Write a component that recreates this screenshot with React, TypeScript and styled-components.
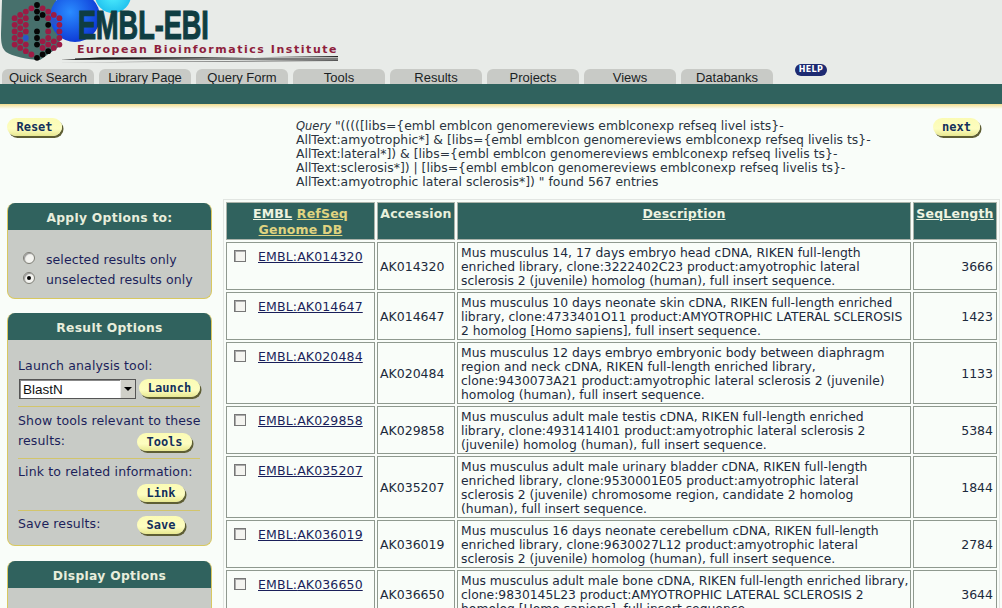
import React from "react";
import styled, { createGlobalStyle } from "styled-components";

const Global = createGlobalStyle`
  html, body { margin: 0; padding: 0; background: #f9fdf9; height: 608px; overflow: hidden; }
  body { font-family: "DejaVu Sans", Verdana, sans-serif; font-size: 12.5px; color: #1c2a3c; }
`;
const Page = styled.div`width: 1002px; height: 608px; overflow: hidden;`;
const Header = styled.header`height: 84px; background: #e8ebe8; display: flex; flex-direction: column; justify-content: flex-end;`;
const Logo = styled.div`position: relative; width: 340px; height: 66px; flex: none; overflow: hidden;`;
const LogoArt = styled.svg`position: absolute; inset: 0;`;
const LogoTitle = styled.span`
  position: absolute; left: 78px; top: 8px; font: 700 41px/34px "Liberation Sans", sans-serif; color: #0f3d42;
  -webkit-text-stroke: 1.2px #0f3d42; transform: scaleX(0.66); transform-origin: left top; white-space: nowrap;
`;
const LogoSub = styled.span`
  position: absolute; left: 77px; top: 43px; font: 700 11px/13px "DejaVu Sans", sans-serif; color: #8f1f3d; letter-spacing: 1.55px; white-space: nowrap;
`;
const TabRow = styled.nav`display: flex; align-items: flex-end; padding-left: 2px; gap: 5px; height: 18px; position: relative;`;
const Tab = styled.a`
  width: 92px; height: 15px; background: #c8cac6; border-radius: 6px 6px 0 0; text-align: center;
  font: 13px/17px "Liberation Sans", Arial, sans-serif; color: #1a1f24; overflow: hidden;
`;
const Help = styled.a`
  position: absolute; left: 795px; top: -2px; width: 32px; height: 12px; border-radius: 6px; background: #1d2a72; color: #fff;
  font: 700 8px/12px "DejaVu Sans", sans-serif; text-align: center; letter-spacing: .3px;
`;
const Band = styled.div`height: 20px; background: #30625e;`;
const Fade = styled.div`height: 5px; background: linear-gradient(#f3dc8e, #f9fdf9);`;
const QueryRow = styled.section`
  box-sizing: border-box; height: 92px; padding: 9px 22px 0 7px; display: grid; grid-template-columns: 289px 1fr auto; align-items: start;
`;
const Btn = styled.button`
  display: block; padding: 0; margin: 0; height: 18px; width: ${p => p.$w}px; border: none; border-radius: 9px; flex: none;
  background: linear-gradient(#fbfbb4, #fdfdc0 60%, #e8e890); box-shadow: 1.5px 2px 0 #5e5e34;
  font: 700 12px/17px "DejaVu Sans Mono", monospace; color: #14305a; text-align: center;
`;
const Query = styled.p`margin: 1px 0 0; line-height: 14px; font-size: 12.4px; color: #2a3440;`;
const QueryLabel = styled.i`font-size: 11.5px;`;
const Main = styled.div`display: flex; align-items: flex-start; gap: 11px; padding-left: 7px;`;
const Side = styled.aside`width: 205px; flex: none; display: flex; flex-direction: column; gap: 14px; padding-top: 2px;`;
const Panel = styled.section`
  background: #c8cbc6; border: 1px solid #d8c860; border-top: none; border-radius: 8px; overflow: hidden; margin-top: ${p => p.$mt || 0}px;
`;
const PanelTitle = styled.h2`
  margin: 0; height: 27px; background: #30625e; color: #e8eedc; font: 700 12.3px/30px "DejaVu Sans", sans-serif; text-align: center; letter-spacing: .3px;
`;
const RadioGroup = styled.div`padding: 22px 0 12px 15px; display: flex; flex-direction: column; gap: 6px;`;
const RadioRow = styled.label`display: flex; align-items: center; gap: 11px; height: 14px; font-size: 12.5px; color: #1c1f5a; letter-spacing: .08px;`;
const RadioDot = styled.span`
  width: 10px; height: 10px; border-radius: 50%; flex: none; background: #f4f4f0; border: 1px solid #7c7c74; box-shadow: inset 1px 1px 1px #999; position: relative; top: -1px;
  &::after { content: ""; display: ${p => (p.$on ? "block" : "none")}; width: 4px; height: 4px; border-radius: 50%; background: #000; margin: 3px; }
`;
const Rule = styled.div`height: 1px; background: #d2c56c; margin: 0 11px 0 10px;`;
const Block = styled.div`padding: ${p => p.$pad}; color: #1c1f5a; line-height: 20px; letter-spacing: .14px; font-size: 12.5px;`;
const BtnLine = styled.div`display: flex; justify-content: space-between; align-items: flex-end; min-height: 20px; padding-right: ${p => p.$r}px;`;
const ToolRow = styled.div`display: flex; align-items: flex-start; gap: 3px; margin: 3px 0 0 1px;`;
const Select = styled.div`
  width: 117px; height: 20px; background: #fff; border: 1px solid #555; box-shadow: inset 1px 1px 0 #888; display: flex; justify-content: space-between; box-sizing: border-box;
  font: 13.5px/19px "Liberation Sans", sans-serif; color: #111; padding-left: 3px; letter-spacing: 0;
`;
const SelectArrow = styled.span`
  width: 14px; background: #cfcfc8; border-left: 1px solid #eee; display: flex; align-items: center; justify-content: center;
  &::after { content: ""; border: 4px solid transparent; border-top: 4px solid #000; border-bottom: 0; }
`;
const Results = styled.table`
  border-collapse: separate; border-spacing: 2px; table-layout: fixed; width: 777px; margin-top: -2px; border: 1px solid #e2e6e2; flex: none;
`;
const Th = styled.th`
  background: #30625e; color: #e8f0dc; vertical-align: top; padding: 3px 2px 0; font-size: 12.5px; line-height: 16px; font-weight: 700; letter-spacing: .2px;
  border: 1px solid #aab3aa; height: 38px; box-sizing: border-box;
`;
const HeadLink = styled.a`text-decoration: underline; color: ${p => (p.$gold ? "#e0d480" : "#eef3e0")};`;
const Td = styled.td`
  border: 1px solid #8f998f; padding: 2px 3px 0; line-height: 14px; font-size: 12.35px; color: #1c2a3c; vertical-align: ${p => (p.$top ? "top" : "middle")};
  text-align: ${p => (p.$right ? "right" : "left")}; box-sizing: border-box; overflow: hidden; white-space: nowrap;
`;
const AccTd = styled(Td)`font-size: 12.5px; padding-left: 2px;`;
const NumTd = styled(Td)`font-size: 12.5px;`;
const Check = styled.span`display: inline-block; width: 10px; height: 10px; background: #f4f4f0; border: 1px solid #777; box-shadow: inset 1px 1px 0 #aaa; margin: 5px 0 0 4px;`;
const EntryLink = styled.a`text-decoration: underline; color: #1a1f5a; margin-left: 12px; font-size: 12.5px; letter-spacing: .14px; position: relative; top: -1px;`;
const LineBreak = styled.span`display: block;`;

const black = new Set(["0,0", "0,2", "0,4", "1,3", "0,8", "0,10", "0,12", "0,16", "1,15", "2,14", "2,6", "3,9"]);
const blue = new Set(["3,5", "-2,10"]);
const skip = (k: number, j: number) =>
  (k === -1 && j >= 3 && j <= 14) || (k === 1 && j >= 5 && j <= 9) || (k === 3 && j >= 7 && j <= 9) || (k === 0 && j === 6) || (k === 0 && j === 14);
const lattice: { x: number; y: number; c: string }[] = [];
for (let k = -4; k <= 4; k++) {
  for (let j = Math.abs(k); j <= 17 - Math.abs(k); j++) {
    if ((k + j) % 2 !== 0 || skip(k, j)) continue;
    const id = `${k},${j}`;
    lattice.push({ x: 37 + 5.6 * k, y: 5 + 3.3 * j, c: black.has(id) ? "#050505" : blue.has(id) ? "#2a55c8" : "#9b1b44" });
  }
}

const rows = [
  ["AK014320", ["Mus musculus 14, 17 days embryo head cDNA, RIKEN full-length", "enriched library, clone:3222402C23 product:amyotrophic lateral", "sclerosis 2 (juvenile) homolog (human), full insert sequence."], "3666", 48],
  ["AK014647", ["Mus musculus 10 days neonate skin cDNA, RIKEN full-length enriched", "library, clone:4733401O11 product:AMYOTROPHIC LATERAL SCLEROSIS", "2 homolog [Homo sapiens], full insert sequence."], "1423", 48],
  ["AK020484", ["Mus musculus 12 days embryo embryonic body between diaphragm", "region and neck cDNA, RIKEN full-length enriched library,", "clone:9430073A21 product:amyotrophic lateral sclerosis 2 (juvenile)", "homolog (human), full insert sequence."], "1133", 62],
  ["AK029858", ["Mus musculus adult male testis cDNA, RIKEN full-length enriched", "library, clone:4931414I01 product:amyotrophic lateral sclerosis 2", "(juvenile) homolog (human), full insert sequence."], "5384", 48],
  ["AK035207", ["Mus musculus adult male urinary bladder cDNA, RIKEN full-length", "enriched library, clone:9530001E05 product:amyotrophic lateral", "sclerosis 2 (juvenile) chromosome region, candidate 2 homolog", "(human), full insert sequence."], "1844", 62],
  ["AK036019", ["Mus musculus 16 days neonate cerebellum cDNA, RIKEN full-length", "enriched library, clone:9630027L12 product:amyotrophic lateral", "sclerosis 2 (juvenile) homolog (human), full insert sequence."], "2784", 48],
  ["AK036650", ["Mus musculus adult male bone cDNA, RIKEN full-length enriched library,", "clone:9830145L23 product:AMYOTROPHIC LATERAL SCLEROSIS 2", "homolog [Homo sapiens], full insert sequence."], "3644", 48],
] as const;

export default function App() {
  return (
    <Page>
      <Global />
      <Header>
        <Logo>
          <LogoArt width="340" height="66" viewBox="0 0 340 66">
            <defs>
              <radialGradient id="b" cx=".4" cy=".4" r=".7"><stop offset="0" stopColor="#2a8cff" /><stop offset="1" stopColor="#0a2fd0" /></radialGradient>
              <radialGradient id="c" cx=".5" cy=".5" r=".7"><stop offset="0" stopColor="#50f0ff" /><stop offset="1" stopColor="#10b0e8" /></radialGradient>
            </defs>
            <circle cx="113" cy="-5" r="18" fill="url(#c)" />
            <path d="M2 0 H56 L60 46 L40 60 C28 60 12 56 6 52 C2 48 1 44 1 34 Z" fill="#47706c" />
            <circle cx="75" cy="17" r="25" fill="url(#b)" />
            {lattice.map((d, i) => <circle key={i} cx={d.x} cy={d.y} r="2.9" fill={d.c} />)}
            <path d="M60 60 L338 56 V57.2 H100 Z" fill="#222" />
            <rect x="75" y="58.5" width="263" height="1" fill="#111" />
            <path d="M55 62.5 L338 60 V61 Z" fill="#555" />
          </LogoArt>
          <LogoTitle>EMBL-EBI</LogoTitle>
          <LogoSub>European Bioinformatics Institute</LogoSub>
        </Logo>
        <TabRow>
          {["Quick Search", "Library Page", "Query Form", "Tools", "Results", "Projects", "Views", "Databanks"].map(t => <Tab key={t}>{t}</Tab>)}
          <Help>HELP</Help>
        </TabRow>
      </Header>
      <Band />
      <Fade />
      <QueryRow>
        <Btn $w={55}>Reset</Btn>
        <Query>
          <QueryLabel>Query</QueryLabel> "(((([libs={"{"}embl emblcon genomereviews emblconexp refseq livel ists{"}"}-<br />
          AllText:amyotrophic*] &amp; [libs={"{"}embl emblcon genomereviews emblconexp refseq livelis ts{"}"}-<br />
          AllText:lateral*]) &amp; [libs={"{"}embl emblcon genomereviews emblconexp refseq livelis ts{"}"}-<br />
          AllText:sclerosis*]) | [libs={"{"}embl emblcon genomereviews emblconexp refseq livelis ts{"}"}-<br />
          AllText:amyotrophic lateral sclerosis*]) " found 567 entries
        </Query>
        <Btn $w={47}>next</Btn>
      </QueryRow>
      <Main>
        <Side>
          <Panel>
            <PanelTitle>Apply Options to:</PanelTitle>
            <RadioGroup>
              <RadioRow><RadioDot />selected results only</RadioRow>
              <RadioRow><RadioDot $on />unselected results only</RadioRow>
            </RadioGroup>
          </Panel>
          <Panel>
            <PanelTitle>Result Options</PanelTitle>
            <Block $pad="16px 0 7px 10px">
              Launch analysis tool:
              <ToolRow><Select>BlastN<SelectArrow /></Select><Btn $w={61}>Launch</Btn></ToolRow>
            </Block>
            <Rule />
            <Block $pad="4px 0 7px 10px">
              Show tools relevant to these
              <BtnLine $r={19}>results:<Btn $w={55}>Tools</Btn></BtnLine>
            </Block>
            <Rule />
            <Block $pad="3px 0 8px 10px">
              Link to related information:
              <BtnLine $r={26}><span /><Btn $w={48}>Link</Btn></BtnLine>
            </Block>
            <Rule />
            <Block $pad="3px 0 11px 10px">
              <BtnLine $r={26}>Save results:<Btn $w={48}>Save</Btn></BtnLine>
            </Block>
          </Panel>
          <Panel $mt={1}>
            <PanelTitle>Display Options</PanelTitle>
            <Block $pad="40px 0" />
          </Panel>
        </Side>
        <Results>
          <colgroup><col width="149" /><col width="78" /><col width="454" /><col width="84" /></colgroup>
          <thead>
            <tr>
              <Th><HeadLink>EMBL</HeadLink> <HeadLink $gold>RefSeq</HeadLink><LineBreak><HeadLink $gold>Genome DB</HeadLink></LineBreak></Th>
              <Th>Accession</Th>
              <Th><HeadLink>Description</HeadLink></Th>
              <Th><HeadLink>SeqLength</HeadLink></Th>
            </tr>
          </thead>
          <tbody>
            {rows.map(r => (
              <tr key={r[0]} style={{ height: r[3] }}>
                <Td $top><Check /><EntryLink>EMBL:{r[0]}</EntryLink></Td>
                <AccTd>{r[0]}</AccTd>
                <Td>{r[1].map(l => <LineBreak key={l}>{l}</LineBreak>)}</Td>
                <NumTd $right>{r[2]}</NumTd>
              </tr>
            ))}
          </tbody>
        </Results>
      </Main>
    </Page>
  );
}
